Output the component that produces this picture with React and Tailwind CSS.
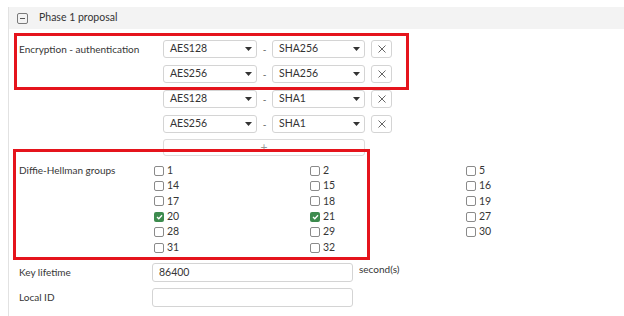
import { useState } from "react";

const font = { fontFamily: "Lato, 'Open Sans', sans-serif" };

const Caret = () => (
  <svg width="7" height="4" viewBox="0 0 7 4" className="shrink-0">
    <path d="M0 0h7L3.5 4z" fill="#333" />
  </svg>
);

const Select = ({ value, w }) => (
  <div
    className={`${w} h-[18px] flex items-center justify-between pl-[6px] pr-[4px] border border-[#d4d4d4] rounded-[3px] bg-white text-[10.5px] text-[#333]`}
  >
    <span>{value}</span>
    <Caret />
  </div>
);

const RemoveBtn = () => (
  <div className="w-[21px] h-[18px] flex items-center justify-center border border-[#d4d4d4] rounded-[3px] bg-white">
    <svg width="8" height="8" viewBox="0 0 8 8">
      <path d="M0.5 0.5l7 7M7.5 0.5l-7 7" stroke="#666" strokeWidth="1" />
    </svg>
  </div>
);

const Checkbox = ({ checked }) =>
  checked ? (
    <span className="w-[10px] h-[10px] rounded-[2px] bg-[#3d8b4e] flex items-center justify-center shrink-0">
      <svg width="7" height="6" viewBox="0 0 7 6">
        <path d="M1 3l1.8 1.8L6 1.2" stroke="#fff" strokeWidth="1.3" fill="none" />
      </svg>
    </span>
  ) : (
    <span className="w-[10px] h-[10px] rounded-[2px] border border-[#8a8a8a] bg-white shrink-0" />
  );

const groups = [
  [1, false], [2, false], [5, false],
  [14, false], [15, false], [16, false],
  [17, false], [18, false], [19, false],
  [20, true], [21, true], [27, false],
  [28, false], [29, false], [30, false],
  [31, false], [32, false],
];

const proposals = [
  ["AES128", "SHA256"],
  ["AES256", "SHA256"],
  ["AES128", "SHA1"],
  ["AES256", "SHA1"],
];

export default function App() {
  const [lifetime] = useState("86400");

  return (
    <div className="w-[624px] h-[316px] bg-white overflow-hidden relative text-[#363636] text-[10px]" style={font}>
      <div className="ml-[8px] h-full border-l border-[#e2e2e2]">
        {/* header */}
        <div className="mt-[7px] h-[22px] bg-[#f3f3f3] flex items-center pl-[8px] gap-[11px]">
          <span className="w-[11px] h-[11px] border border-[#7a7a7a] rounded-[2px] flex items-center justify-center">
            <span className="w-[5px] h-px bg-[#555]" />
          </span>
          <span className="text-[10.5px] text-[#333]">Phase 1 proposal</span>
        </div>

        <div className="pl-[10px]">
          {/* encryption - authentication */}
          <div className="flex mt-[11px]">
            <div className="w-[133px] h-[18px] flex items-center whitespace-nowrap">Encryption - authentication</div>
            <div className="ml-[11px] flex flex-col gap-[7px]">
              {proposals.map(([enc, auth], i) => (
                <div key={i} className="flex items-center">
                  <Select value={enc} w="w-[94px]" />
                  <span className="w-[15px] text-center text-[#555]">-</span>
                  <Select value={auth} w="w-[93px]" />
                  <span className="ml-[6px]">
                    <RemoveBtn />
                  </span>
                </div>
              ))}
              <div className="w-[202px] h-[17px] -mt-[1px] border border-[#dcdcdc] rounded-[3px] flex justify-center text-[12px] leading-[14px] text-[#999]">
                +
              </div>
            </div>
          </div>

          {/* DH groups */}
          <div className="flex mt-[7px]">
            <div className="w-[133px] h-[15.4px] flex items-center whitespace-nowrap">Diffie-Hellman groups</div>
            <div className="ml-[2px] grid grid-cols-[156px_156px_156px] auto-rows-[15.4px]">
              {groups.map(([n, c]) => (
                <div key={n} className="flex items-center gap-[3px] text-[10.5px]">
                  <Checkbox checked={c} />
                  <span>{n}</span>
                </div>
              ))}
            </div>
          </div>

          {/* key lifetime */}
          <div className="flex items-start mt-[8px]">
            <div className="w-[133px] h-[19px] flex items-center">Key lifetime</div>
            <div className="w-[201px] h-[19px] border border-[#d4d4d4] rounded-[3px] flex items-center pl-[6px] text-[10.5px]">
              {lifetime}
            </div>
            <span className="ml-[6px] leading-[14px] mt-[-1px]">second(s)</span>
          </div>

          {/* local id */}
          <div className="flex items-center mt-[6px]">
            <div className="w-[133px] h-[19px] flex items-center">Local ID</div>
            <div className="w-[201px] h-[19px] border border-[#d4d4d4] rounded-[3px]" />
          </div>
        </div>
      </div>

      {/* annotation boxes */}
      <div className="absolute left-[14px] top-[33px] w-[395px] h-[57px] border-[3px] border-[#e5141c] pointer-events-none" />
      <div className="absolute left-[13px] top-[149px] w-[357px] h-[111px] border-[3px] border-[#e5141c] pointer-events-none" />
    </div>
  );
}
